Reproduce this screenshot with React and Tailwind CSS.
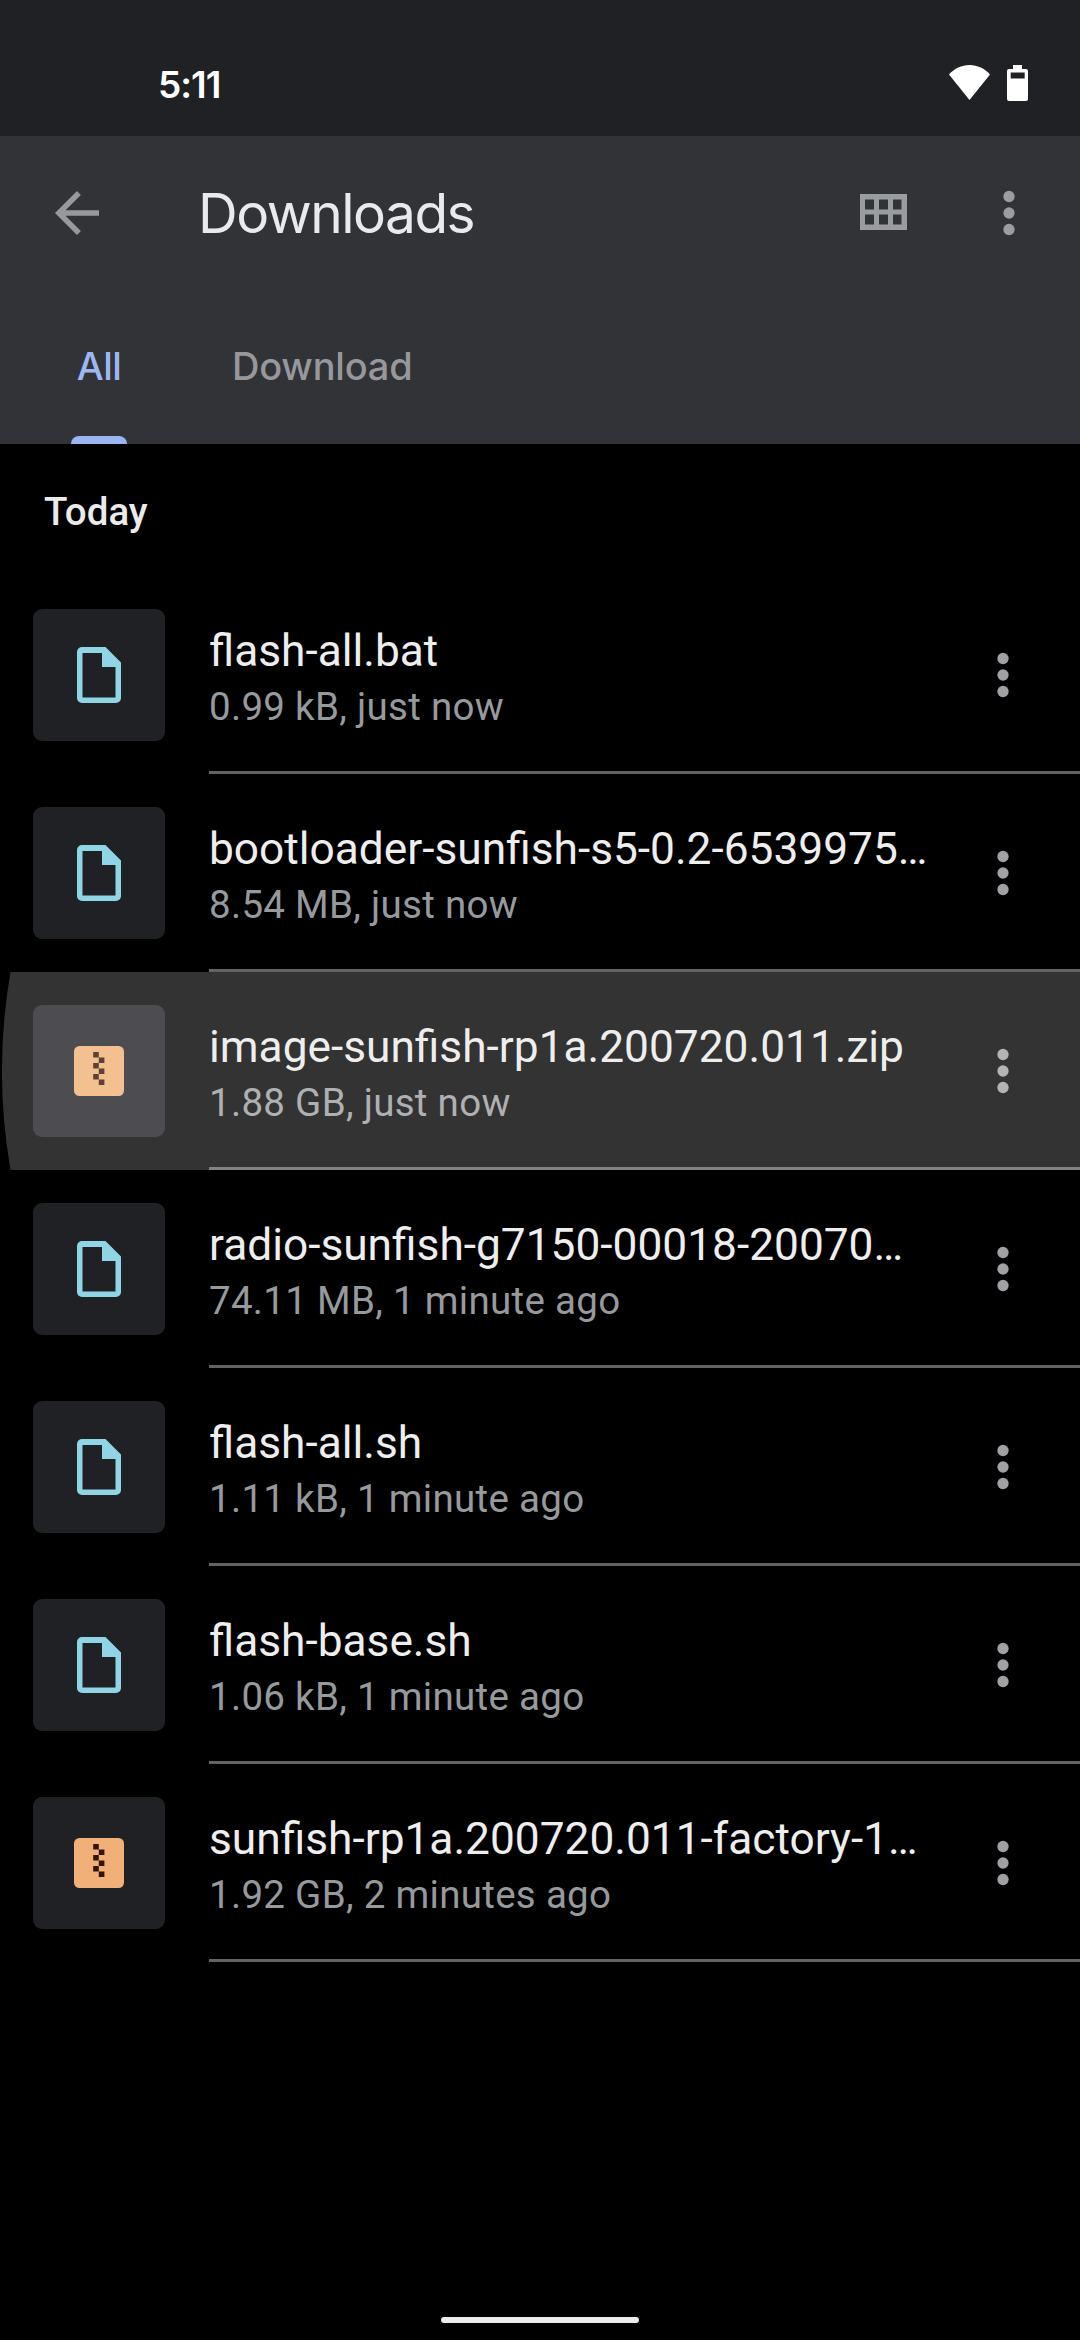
import React from 'react';
import clsx from 'clsx';

const files = [
  { name: 'flash-all.bat', info: '0.99 kB, just now', type: 'file' },
  { name: 'bootloader-sunfish-s5-0.2-6539975…', info: '8.54 MB, just now', type: 'file' },
  { name: 'image-sunfish-rp1a.200720.011.zip', info: '1.88 GB, just now', type: 'zip', pressed: true },
  { name: 'radio-sunfish-g7150-00018-20070…', info: '74.11 MB, 1 minute ago', type: 'file' },
  { name: 'flash-all.sh', info: '1.11 kB, 1 minute ago', type: 'file' },
  { name: 'flash-base.sh', info: '1.06 kB, 1 minute ago', type: 'file' },
  { name: 'sunfish-rp1a.200720.011-factory-1…', info: '1.92 GB, 2 minutes ago', type: 'zip' },
];

const MoreIcon = ({ className }) => (
  <svg viewBox="0 0 24 24" className={clsx('size-[66px] shrink-0', className)} fill="currentColor">
    <circle cx="12" cy="6" r="2.05" />
    <circle cx="12" cy="12" r="2.05" />
    <circle cx="12" cy="18" r="2.05" />
  </svg>
);

const FileIcon = () => (
  <svg viewBox="0 0 44 56" className="h-14 w-11" fill="#8fd5e6" fillRule="evenodd">
    <path d="M5 0H28.5L44 15.5V51a5 5 0 0 1-5 5H5a5 5 0 0 1-5-5V5a5 5 0 0 1 5-5ZM5.5 6V50.5H38.5V20H25V6Z" />
  </svg>
);

const ZipIcon = ({ pressed }) => (
  <svg viewBox="0 0 50 50" className="size-[50px]">
    <rect width="50" height="50" rx="5.5" fill={pressed ? '#f3c08f' : '#f0b077'} />
    <path
      d="M19.2 6h5.6v5.5h-5.6ZM24.8 11.5h5.6V17h-5.6ZM19.2 17h5.6v5.5h-5.6ZM24.8 22.5h5.6V28h-5.6ZM19.2 28h5.6v5.5h-5.6ZM24.8 33.5h5.6V39h-5.6Z"
      fill={pressed ? '#5d4037' : '#321507'}
    />
  </svg>
);

const StatusBar = () => (
  <div className="flex h-[136px] items-start justify-between bg-[#202124] pr-[52px] pl-[158px] text-white">
    <span className="mt-[63px] font-['Inter'] text-[37px] leading-[44px] font-semibold tracking-[-1px]">5:11</span>
    <div className="mt-[65px] flex gap-[17px]">
      <svg viewBox="0 0 41 35" className="h-[35px] w-[41px]" fill="currentColor">
        <path d="M0 9.5C5.5 3.4 12.5 0 20.5 0S35.5 3.4 41 9.5L20.5 35Z" />
      </svg>
      <svg viewBox="0 0 21 36" className="h-9 w-[21px]" fill="currentColor" fillRule="evenodd">
        <path d="M6 0h9v4h4a2 2 0 0 1 2 2v28a2 2 0 0 1-2 2H2a2 2 0 0 1-2-2V6a2 2 0 0 1 2-2h4ZM3.7 7.5V13.500H17.7V7.5Z" />
      </svg>
    </div>
  </div>
);

const AppBar = () => (
  <header className="h-[308px] bg-[#323337] text-[#9aa0a6]">
    <div className="flex h-[154px] items-center pr-[38px] pl-11">
      <svg viewBox="0 0 24 24" className="size-[66px] text-[#97999c]" fill="currentColor">
        <path d="M20 11H7.83l5.59-5.59L12 4l-8 8 8 8 1.41-1.41L7.83 13H20v-2z" />
      </svg>
      <h1 className="ml-[88px] flex-1 font-['Inter'] text-[55px] leading-[66px] tracking-[-1.5px] text-[#e8eaed]">
        Downloads
      </h1>
      <svg viewBox="0 0 47 36" className="mr-[69px] h-9 w-[47px] -translate-y-px" fill="#9a9da0" fillRule="evenodd">
        <path d="M0 0H47V36H0ZM5 5.5V15.5H14V5.5ZM19 5.5V15.5H28V5.5ZM33 5.5V15.5H41.5V5.5ZM5 20.5V30.5H14V20.5ZM19 20.5V30.5H28V20.5ZM33 20.5V30.5H41.5V20.5Z" />
      </svg>
      <MoreIcon className="text-[#9c9da0]" />
    </div>
    <nav className="flex h-[154px] items-stretch pl-[71px] font-['Inter'] text-[38px] font-medium">
      <div className="flex w-14 flex-col items-center justify-between text-[#9db7f2]">
        <span className="mt-[53px] leading-[46px] tracking-[-0.5px]">All</span>
        <div className="h-2 w-full rounded-t-lg bg-[#9ab5f2]" />
      </div>
      <span className="mt-[53px] ml-[105px] leading-[46px] tracking-[-0.2px] text-[#97989b]">Download</span>
    </nav>
  </header>
);

const FileRow = ({ name, info, type, pressed }) => (
  <li className="relative flex h-[198px] pl-[33px]">
    {/* Touch ripple spreading out from under the finger */}
    {pressed && (
      <svg viewBox="0 0 1080 198" className="absolute inset-0 h-[198px] w-[1080px]">
        <path d="M10.5 0H1080V198H10.5A580 580 0 0 1 10.5 0Z" fill="#333333" />
      </svg>
    )}
    <div
      className={clsx(
        'relative mt-[33px] flex size-[132px] items-center justify-center rounded-[9px]',
        pressed ? 'bg-[#4d4c50]' : 'bg-[#202124]'
      )}
    >
      {type === 'zip' ? <ZipIcon pressed={pressed} /> : <FileIcon />}
    </div>
    <div
      className={clsx(
        'relative ml-11 flex flex-1 justify-between border-b-[3px] pr-11',
        pressed ? 'border-[#828282]' : 'border-[#626365]'
      )}
    >
      <div className="pt-[48px] whitespace-nowrap">
        <p className="text-[44.25px] leading-[54px] text-[#eeeeee]">{name}</p>
        <p
          className={clsx(
            'pt-0.5 text-[38.5px] leading-[54px] tracking-[0.3px]',
            pressed ? 'text-[#afb0b2]' : 'text-[#979a9d]'
          )}
        >
          {info}
        </p>
      </div>
      <MoreIcon className={clsx('mt-[66px]', pressed ? 'text-[#b3b4b6]' : 'text-[#a0a1a4]')} />
    </div>
  </li>
);

const App = () => (
  <div className="flex h-[2340px] w-[1080px] flex-col overflow-hidden bg-black font-['Roboto',sans-serif]">
    <StatusBar />
    <AppBar />
    <main className="flex-1">
      <h2 className="h-[132px] pt-[45px] pl-11 text-[38.5px] leading-[46px] font-medium text-[#ebebeb]">Today</h2>
      <ul>
        {files.map((file) => (
          <FileRow key={file.name} {...file} />
        ))}
      </ul>
    </main>
    <div className="mx-auto mb-[17px] h-1.5 w-[198px] rounded-full bg-[#ebebeb]" />
  </div>
);

export default App;
